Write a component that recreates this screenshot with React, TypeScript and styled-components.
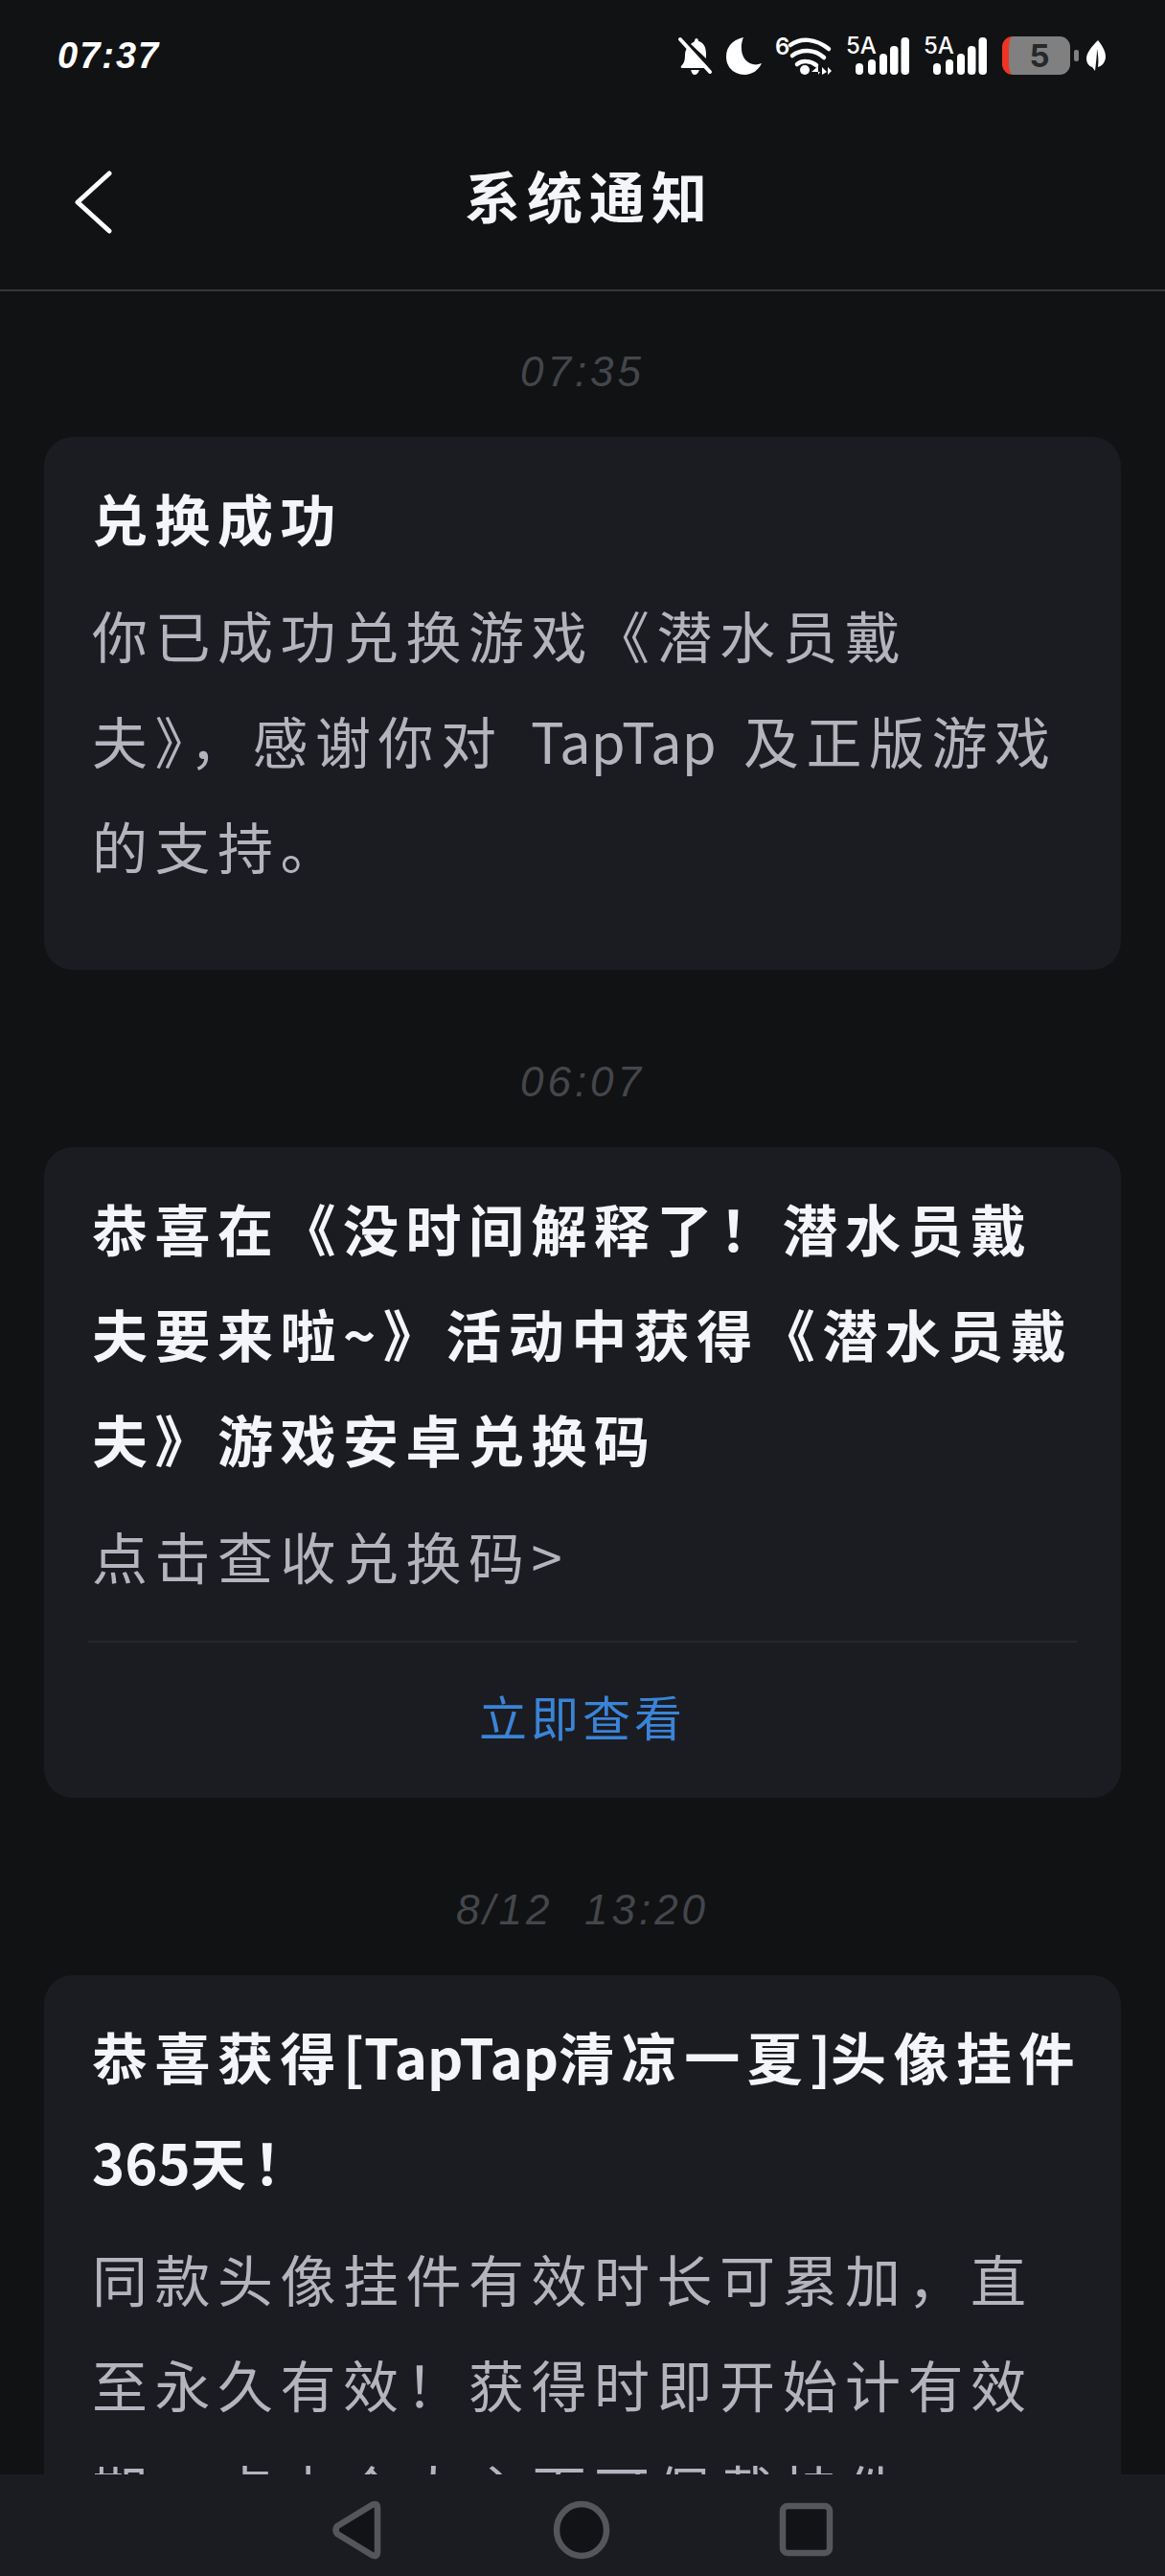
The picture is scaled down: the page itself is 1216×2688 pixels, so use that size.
import React from 'react';
import styled, { createGlobalStyle } from 'styled-components';

const GlobalStyle = createGlobalStyle`
  html, body {
    margin: 0;
    padding: 0;
    background: #101213;
  }
`;

const Page = styled.div`
  position: relative;
  width: 1216px;
  height: 2688px;
  overflow: hidden;
  background: #101213;
  font-family: "Noto Sans CJK SC", "Noto Sans", sans-serif;
`;

const StatusBar = styled.div`
  display: flex;
  align-items: center;
  justify-content: space-between;
  height: 116px;
  padding: 0 62px 0 60px;
  box-sizing: border-box;
`;

const Clock = styled.span`
  font-family: "Liberation Sans", sans-serif;
  font-size: 38px;
  font-weight: 700;
  font-style: italic;
  letter-spacing: 2px;
  color: #fff;
`;

const StatusIcons = styled.div`
  display: flex;
  align-items: center;
  gap: 14px;
`;

const Battery = styled.div`
  display: flex;
  align-items: center;
  gap: 4px;
  margin-left: 1px;
`;

const BatteryBody = styled.div`
  display: flex;
  align-items: center;
  justify-content: center;
  width: 71px;
  height: 40px;
  box-sizing: border-box;
  border-radius: 11px;
  border-left: 7px solid #f03424;
  background: #808080;
  font-family: "Inter", "Liberation Sans", sans-serif;
  font-size: 33px;
  font-weight: 700;
  color: #27282a;
`;

const BatteryNub = styled.div`
  width: 5px;
  height: 12px;
  border-radius: 2px;
  background: #808080;
`;

const Leaf = styled.svg`
  display: block;
  margin-left: -6px;
`;

const Header = styled.header`
  display: grid;
  grid-template-columns: 1fr auto 1fr;
  align-items: center;
  height: 188px;
  box-sizing: border-box;
  border-bottom: 2px solid #35373b;
`;

const BackIcon = styled.svg`
  display: block;
  margin: 4px 0 0 78px;
`;

const HeaderTitle = styled.h1`
  margin: 0 0 12px 14px;
  font-size: 58px;
  line-height: 70px;
  font-weight: 700;
  letter-spacing: 7px;
  color: #f4f5f8;
`;

const Feed = styled.main`
  padding: 50px 46px 0;
`;

const Group = styled.section`
  & + & {
    margin-top: 83px;
  }
`;

const TimeLabel = styled.div`
  height: 68px;
  margin-bottom: 34px;
  font-family: "Liberation Sans", sans-serif;
  font-size: 44px;
  font-style: italic;
  line-height: 68px;
  letter-spacing: 4px;
  text-align: center;
  white-space: pre;
  color: #44464c;
`;

const Card = styled.article<{ $hasAction?: boolean }>`
  padding: 29px 50px ${(p) => (p.$hasAction ? '0' : '75px')};
  border-radius: 30px;
  background: #1b1c22;
`;

const CardTitle = styled.h2`
  margin: 0;
  font-size: 58px;
  line-height: 110px;
  font-weight: 700;
  letter-spacing: 7.5px;
  white-space: nowrap;
  color: #f4f5f8;
`;

const CardBody = styled.p`
  margin: 12px 0 0;
  font-size: 58px;
  line-height: 110px;
  font-weight: 400;
  letter-spacing: 7.5px;
  word-spacing: 8px;
  white-space: nowrap;
  color: #b3b4be;
`;

const Latin = styled.span`
  letter-spacing: 0;
`;

const CardAction = styled.div`
  display: flex;
  align-items: center;
  justify-content: center;
  height: 162px;
  box-sizing: content-box;
  margin: 34px -4px 0;
  border-top: 2px solid #26272d;
  font-size: 50px;
  line-height: 60px;
  padding-bottom: 0;
  letter-spacing: 4px;
  color: #3a84d8;

  & > span {
    margin-bottom: 10px;
  }
`;

const NavBar = styled.nav`
  position: absolute;
  left: 0;
  right: 0;
  bottom: 0;
  display: flex;
  align-items: center;
  justify-content: center;
  gap: 176px;
  height: 106px;
  box-sizing: border-box;
  padding-top: 9px;
  background: #1b1c22;
`;

const NavIcon = styled.svg`
  display: block;
  fill: #121317;
  stroke: #55565b;
  stroke-width: 6.5;
  stroke-linejoin: round;
`;

const iconFont = 'Inter, Liberation Sans, sans-serif';

const SignalIcon = () => (
  <svg width="67" height="58" viewBox="0 -8 67 58" fill="#fff">
    <text x="0" y="19" fontFamily={iconFont} fontSize="24" fontWeight="500">
      5A
    </text>
    <rect x="10" y="29" width="8" height="12" rx="4" />
    <rect x="23" y="25" width="8" height="16" rx="4" />
    <rect x="35" y="19" width="8" height="22" rx="4" />
    <rect x="46" y="11" width="8.5" height="30" rx="4" />
    <rect x="57.5" y="2" width="8.5" height="39" rx="4" />
  </svg>
);

const sections = [
  {
    time: '07:35',
    title: ['兑换成功'],
    body: ['你已成功兑换游戏《潜水员戴', '夫》，感谢你对 TapTap 及正版游戏', '的支持。'],
  },
  {
    time: '06:07',
    title: ['恭喜在《没时间解释了！潜水员戴', '夫要来啦~》活动中获得《潜水员戴', '夫》游戏安卓兑换码'],
    body: ['点击查收兑换码>'],
    action: '立即查看',
  },
  {
    time: '8/12  13:20',
    title: ['恭喜获得[TapTap清凉一夏]头像挂件', '365天！'],
    body: ['同款头像挂件有效时长可累加，直', '至永久有效！获得时即开始计有效', '期，点击个人主页可佩戴挂件。'],
  },
];

// latin runs sit tighter than the hanzi around them
const renderLine = (line: string) =>
  line.split(/([A-Za-z0-9[\]]+)/).map((part, i) => (i % 2 ? <Latin key={i}>{part}</Latin> : part));

const withBreaks = (lines: string[]) =>
  lines.map((line, i) => (
    <React.Fragment key={line}>
      {i > 0 && <br />}
      {renderLine(line)}
    </React.Fragment>
  ));

export default function App() {
  return (
    <Page>
      <GlobalStyle />
      <StatusBar>
        <Clock>07:37</Clock>
        <StatusIcons>
          <svg width="37" height="40" viewBox="0 0 37 40" fill="#fff">
            <path d="M4 31c3-3 4-6 4-12 0-3 1-6 3-8l19 19 1 1c1 1 0 2-1 2H5c-1 0-2-1-1-2zM14 8c1-1 3-2 4-3 0-2 1-3 2-3s2 1 2 3c5 1 8 6 8 13v5zM14 35h9c-1 3-3 5-5 5s-3-2-4-5z" />
            <path d="M3 3l31 34" stroke="#fff" strokeWidth="4" strokeLinecap="round" />
          </svg>
          <svg width="37" height="39" viewBox="0 0 37 39" fill="#fff">
            <path d="M18 0C7 2 0 10 0 20c0 11 8 19 19 19 8 0 15-5 18-12-3 1-6 2-9 1C17 26 13 12 18 0z" />
          </svg>
          <svg width="60" height="58" viewBox="0 -8 60 58" fill="#fff">
            <text x="0" y="20" fontFamily={iconFont} fontSize="24" fontWeight="600">
              6
            </text>
            <g fill="none" stroke="#fff" strokeWidth="4.5" strokeLinecap="round">
              <path d="M16 10c11-8 26-7 40 4" />
              <path d="M18 21c9-7 23-7 33 2" />
              <path d="M23 30c5-4 14-4 20 1" />
            </g>
            <circle cx="31" cy="36" r="5" />
            <path d="M45 41v-9l-7 6h9zM49 41v-8l5 5zM55 33v8l4-4z" />
          </svg>
          <SignalIcon />
          <SignalIcon />
          <Battery>
            <BatteryBody>5</BatteryBody>
            <BatteryNub />
          </Battery>
          <Leaf width="20" height="32" viewBox="0 0 20 32" fill="#fff">
            <path d="M12 0c5 6 8 12 8 17 0 6-4 10-8 11 1-7 0-14-1-19 0 7-1 14-2 23-1-1-2-3-3-4-4-1-6-5-6-9C0 13 6 6 12 0z" />
          </Leaf>
        </StatusIcons>
      </StatusBar>

      <Header>
        <BackIcon width="40" height="66" viewBox="0 0 40 66" fill="none" stroke="#fff" strokeWidth="5" strokeLinecap="round" strokeLinejoin="round">
          <path d="M36 3L3 33l33 30" />
        </BackIcon>
        <HeaderTitle>系统通知</HeaderTitle>
      </Header>

      <Feed>
        {sections.map((s) => (
          <Group key={s.time}>
            <TimeLabel>{s.time}</TimeLabel>
            <Card $hasAction={!!s.action}>
              <CardTitle>{withBreaks(s.title)}</CardTitle>
              <CardBody>{withBreaks(s.body)}</CardBody>
              {s.action && (
                <CardAction>
                  <span>{s.action}</span>
                </CardAction>
              )}
            </Card>
          </Group>
        ))}
      </Feed>

      <NavBar>
        <NavIcon width="55" height="64" viewBox="0 0 55 64">
          <path d="M6 28L42 6Q48 3 48 9V55Q48 61 42 58L6 36Q3 32 6 28Z" />
        </NavIcon>
        <NavIcon width="60" height="62" viewBox="0 0 60 62">
          <ellipse cx="30" cy="31" rx="26" ry="27" />
        </NavIcon>
        <NavIcon width="57" height="57" viewBox="0 0 57 57">
          <rect x="4" y="4" width="49" height="49" rx="5" />
        </NavIcon>
      </NavBar>
    </Page>
  );
}
